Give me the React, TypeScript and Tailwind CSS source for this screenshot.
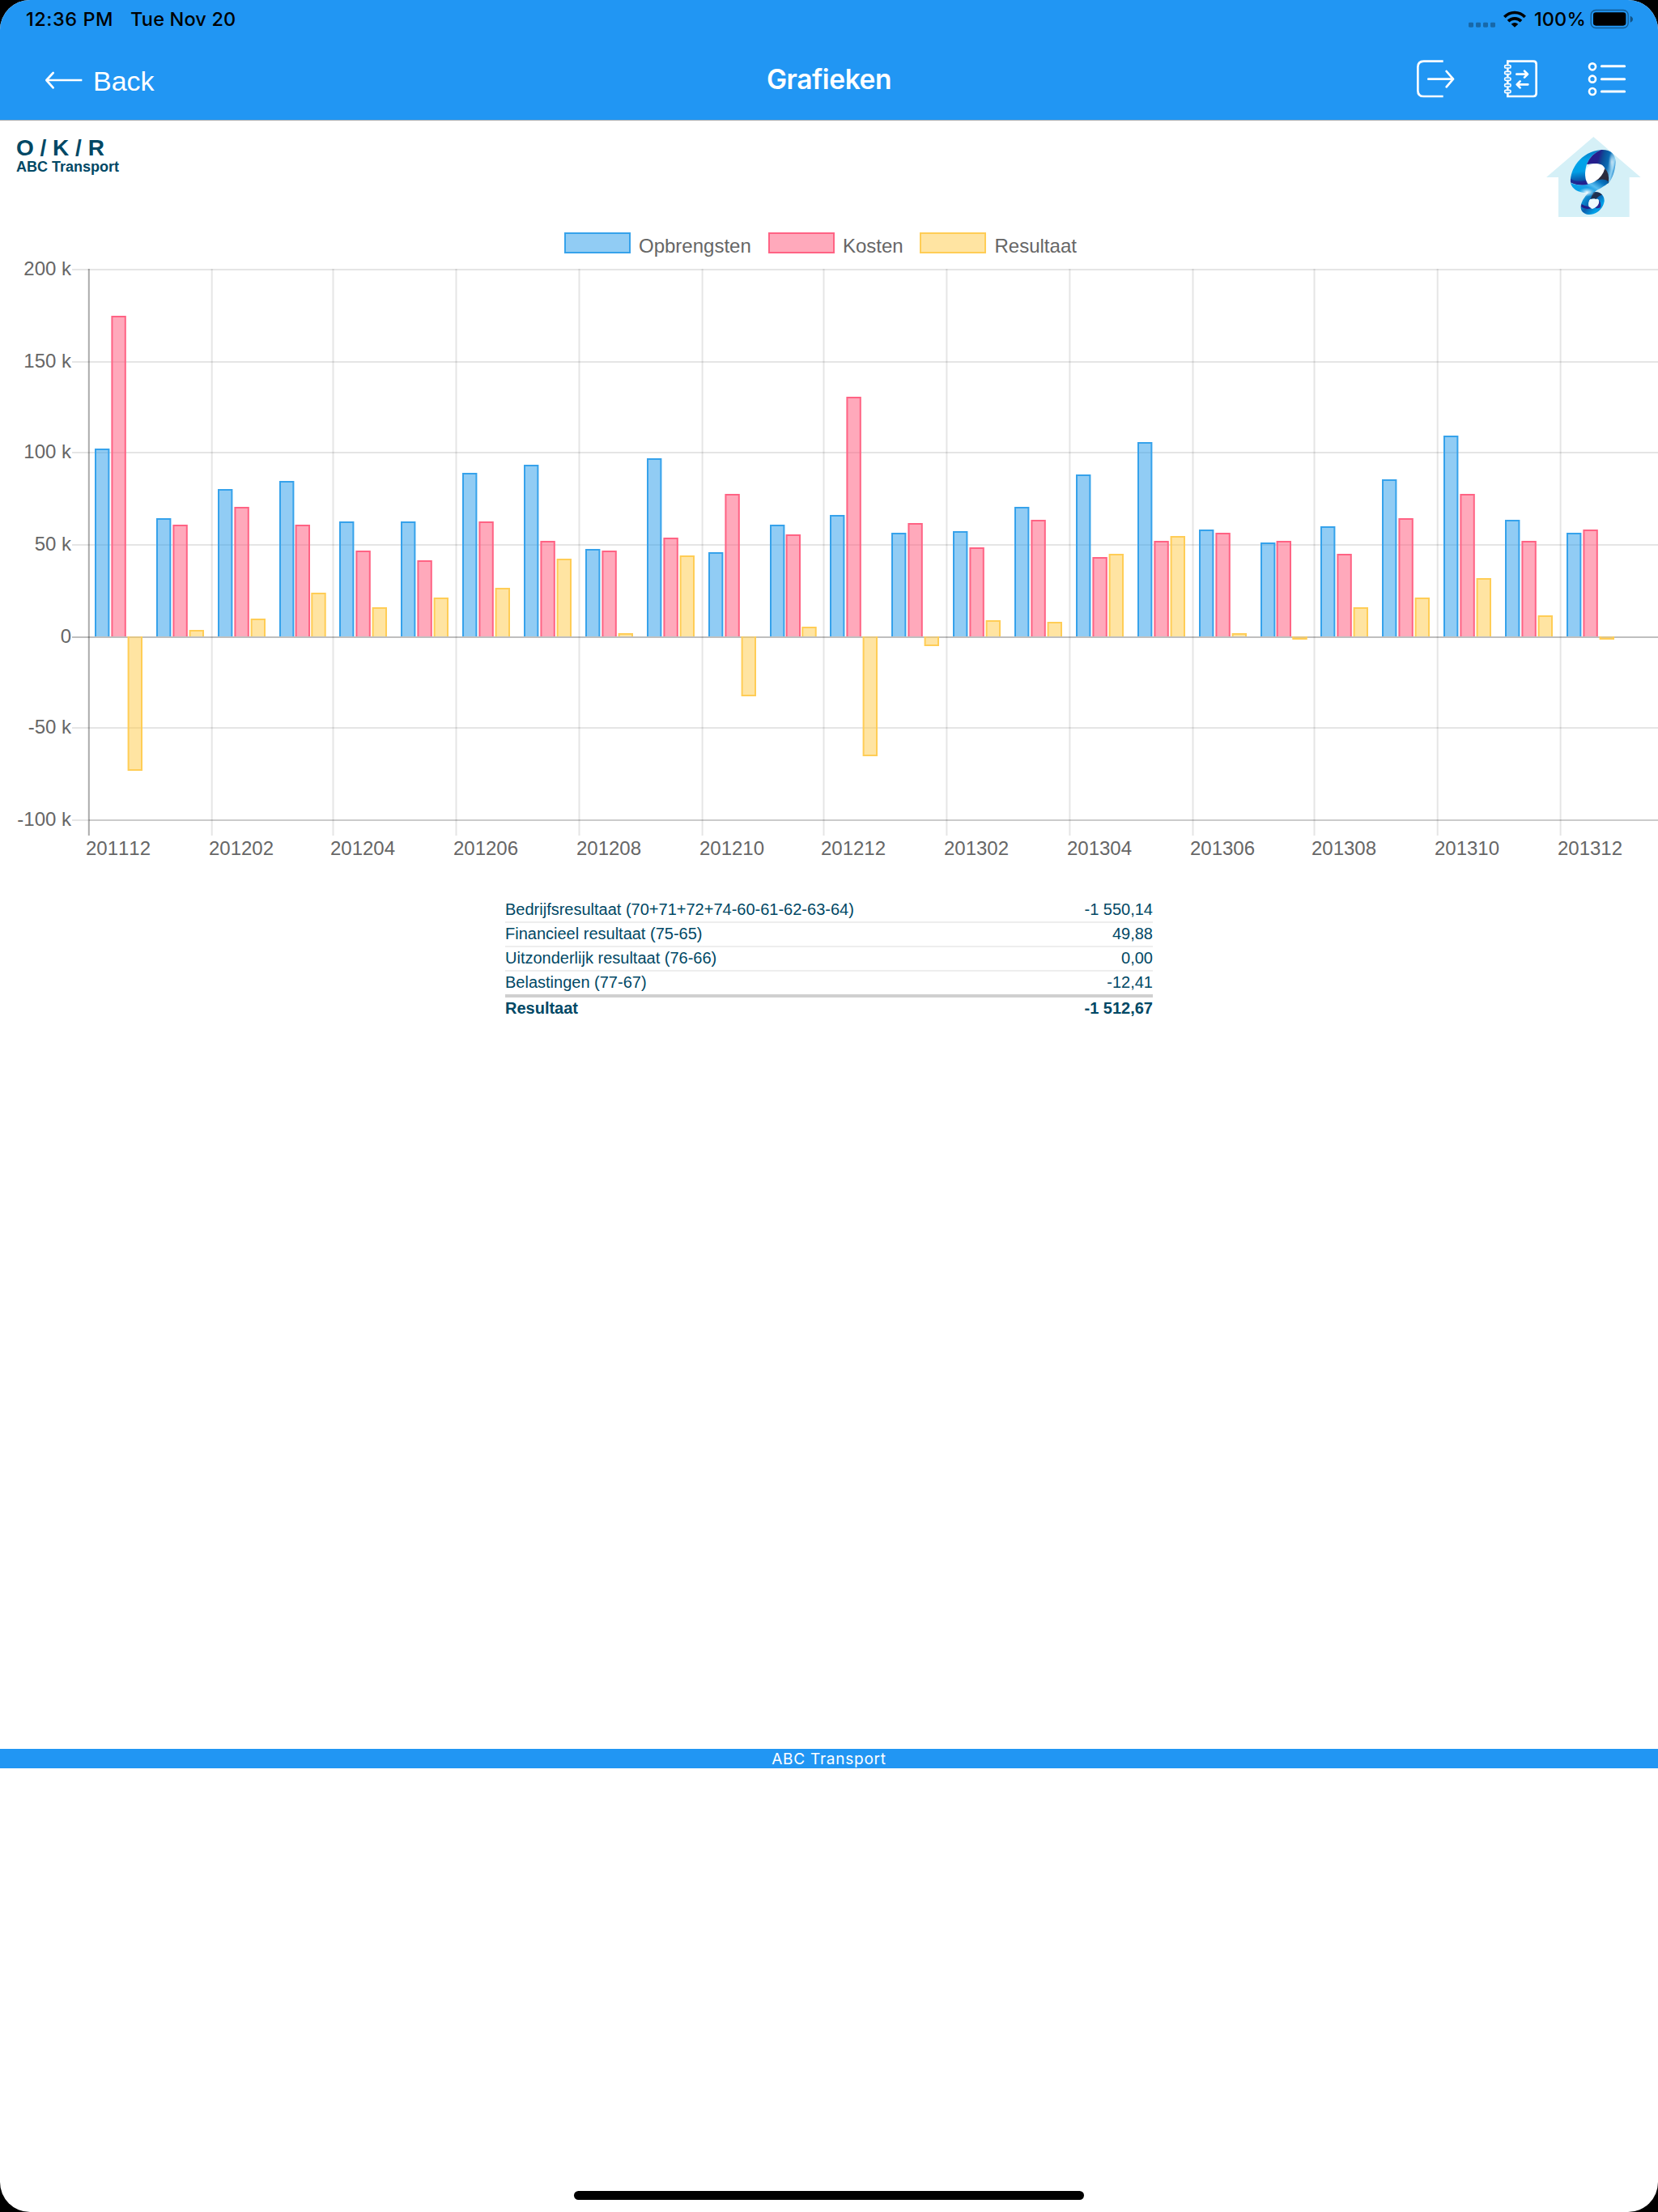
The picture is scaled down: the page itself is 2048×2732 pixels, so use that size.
import type { ReactNode } from "react";

type Group = {
    x: number;
    label?: string;
    // pixel offset of the 2nd and 3rd bar, months are not all equally wide
    red: number;
    yellow: number;
    // y of the end of each bar
    ends: [number, number, number];
};

const ZERO = 786;
const BAR = 18.4;

const groups: Group[] = [
    { x: 117, label: "201112", red: 20.4, yellow: 40.6, ends: [554, 390, 952] },
    { x: 193, red: 20.4, yellow: 40.6, ends: [640, 648, 778] },
    { x: 269, label: "201202", red: 20.4, yellow: 40.6, ends: [604, 626, 764] },
    { x: 345, red: 19.6, yellow: 39.3, ends: [594, 648, 732] },
    { x: 419, label: "201204", red: 20.4, yellow: 40.6, ends: [644, 680, 750] },
    { x: 495, red: 20.4, yellow: 40.6, ends: [644, 692, 738] },
    { x: 571, label: "201206", red: 20.4, yellow: 40.6, ends: [584, 644, 726] },
    { x: 647, red: 20.4, yellow: 40.6, ends: [574, 668, 690] },
    { x: 723, label: "201208", red: 20.4, yellow: 40.6, ends: [678, 680, 782] },
    { x: 799, red: 20.4, yellow: 40.6, ends: [566, 664, 686] },
    { x: 875, label: "201210", red: 20.4, yellow: 40.6, ends: [682, 610, 860] },
    { x: 951, red: 19.6, yellow: 39.3, ends: [648, 660, 774] },
    { x: 1025, label: "201212", red: 20.4, yellow: 40.6, ends: [636, 490, 934] },
    { x: 1101, red: 20.4, yellow: 40.6, ends: [658, 646, 798] },
    { x: 1177, label: "201302", red: 20.4, yellow: 40.6, ends: [656, 676, 766] },
    { x: 1253, red: 20.4, yellow: 40.6, ends: [626, 642, 768] },
    { x: 1329, label: "201304", red: 20.4, yellow: 40.6, ends: [586, 688, 684] },
    { x: 1405, red: 20.4, yellow: 40.6, ends: [546, 668, 662] },
    { x: 1481, label: "201306", red: 20.4, yellow: 40.6, ends: [654, 658, 782] },
    { x: 1557, red: 19.6, yellow: 39.3, ends: [670, 668, 790] },
    { x: 1631, label: "201308", red: 20.4, yellow: 40.6, ends: [650, 684, 750] },
    { x: 1707, red: 20.4, yellow: 40.6, ends: [592, 640, 738] },
    { x: 1783, label: "201310", red: 20.4, yellow: 40.6, ends: [538, 610, 714] },
    { x: 1859, red: 20.4, yellow: 40.6, ends: [642, 668, 760] },
    { x: 1935, label: "201312", red: 20.4, yellow: 40.6, ends: [658, 654, 790] },
];

const yTicks = [
    { y: 333, label: "200 k" },
    { y: 447, label: "150 k" },
    { y: 559, label: "100 k" },
    { y: 673, label: "50 k" },
    { y: 787, label: "0" },
    { y: 899, label: "-50 k" },
    { y: 1013, label: "-100 k" },
];

const xLines = [261.7, 411.5, 563.5, 715.5, 867.6, 1017.5, 1169.4, 1321.4, 1473.5, 1623.5, 1775.7, 1927.6];

const series = [
    { name: "Opbrengsten", stroke: "#36a2eb", fill: "#36a2eb8c", boxX: 697, textX: 789 },
    { name: "Kosten", stroke: "#ff6384", fill: "#ff63848c", boxX: 949, textX: 1041 },
    { name: "Resultaat", stroke: "#ffcd56", fill: "#ffcd568c", boxX: 1136, textX: 1228.5 },
];

const results = [
    { label: "Bedrijfsresultaat (70+71+72+74-60-61-62-63-64)", value: "-1 550,14" },
    { label: "Financieel resultaat (75-65)", value: "49,88" },
    { label: "Uitzonderlijk resultaat (76-66)", value: "0,00" },
    { label: "Belastingen (77-67)", value: "-12,41" },
];

function Bar({ x, end, index }: { x: number; end: number; index: number }) {
    const { stroke, fill } = series[index];
    const left = x + 1;
    const right = x + BAR - 1;
    const edge = end < ZERO ? end + 1 : end - 1;
    return (
        <g>
            <rect x={left} y={Math.min(edge, ZERO)} width={right - left} height={Math.abs(edge - ZERO)} fill={fill} />
            <path d={`M${left} ${ZERO}V${edge}H${right}V${ZERO}`} fill="none" stroke={stroke} strokeWidth="2" />
        </g>
    );
}

function Chart() {
    return (
        <svg viewBox="0 280 2048 790" className="block h-[790px] w-full shrink-0 [font-kerning:none]" fontFamily="'Liberation Sans', Arial, sans-serif" fontSize="24">
            {series.map((s) => (
                <g key={s.name}>
                    <rect x={s.boxX + 1} y="288" width="80" height="24" fill={s.fill} stroke={s.stroke} strokeWidth="2" />
                    <text x={s.textX} y="312" fill="#666">{s.name}</text>
                </g>
            ))}
            {yTicks.map((t) => (
                <g key={t.label}>
                    <rect x="89" y={t.y - 1} width="1959" height="2" fill="#000" fillOpacity={t.label === "0" ? 0.25 : 0.1} />
                    <text x="88" y={t.y + 7} textAnchor="end" fill="#666">{t.label}</text>
                </g>
            ))}
            <rect x="110" y="1012" width="1938" height="2" fill="#000" fillOpacity="0.11" />
            {xLines.map((x) => (
                <rect key={x} x={x - 1} y="332" width="2" height="700" fill="#000" fillOpacity="0.1" />
            ))}
            <rect x="108.8" y="332" width="2" height="700" fill="#000" fillOpacity="0.33" />
            {groups.map((g) => (
                <g key={g.x}>
                    <Bar x={g.x} end={g.ends[0]} index={0} />
                    <Bar x={g.x + g.red} end={g.ends[1]} index={1} />
                    <Bar x={g.x + g.yellow} end={g.ends[2]} index={2} />
                    {g.label && (
                        <text x={g.x + 29} y="1056" textAnchor="middle" fill="#666">{g.label}</text>
                    )}
                </g>
            ))}
        </svg>
    );
}

function NavIcon({ viewBox, children }: { viewBox: string; children: ReactNode }) {
    return (
        <svg viewBox={viewBox} className="size-12" fill="none" stroke="#fff" strokeWidth="8" strokeLinecap="round" strokeLinejoin="round">
            {children}
        </svg>
    );
}

function StatusBar() {
    return (
        <div className="flex h-[47px] items-center justify-between pl-8 pr-[30px] font-[Inter,sans-serif] text-[23.5px] font-medium text-black">
            <div className="flex gap-[21px]">
                <span className="tracking-[0.55px]">12:36 PM</span>
                <span className="tracking-[0.15px]">Tue Nov 20</span>
            </div>
            <div className="flex items-center">
                <svg viewBox="342 34 216 76" className="h-[25.33px] w-[72px]">
                    <g fillOpacity="0.3">
                        <rect x="342" y="84" width="18" height="18" rx="4" />
                        <rect x="369" y="84" width="18" height="18" rx="4" />
                        <rect x="396" y="84" width="18" height="18" rx="4" />
                        <rect x="423" y="84" width="18" height="18" rx="4" />
                    </g>
                    <path d="M475 64A52 52 0 0 1 551 64M489 79.500A34 34 0 0 1 537 79.500" fill="none" stroke="#000" strokeWidth="11" />
                    <path d="M500 90.500Q513 80 526 90.500L513 102Z" />
                </svg>
                <span className="ml-[9px] w-[62px] tracking-[0.1px]">100%</span>
                <svg viewBox="795 34 162 76" className="ml-[7px] h-[25.33px] w-[54px]">
                    <rect x="798.500" y="38.500" width="138" height="66" rx="18" fill="none" stroke="#000" strokeOpacity="0.4" strokeWidth="4" />
                    <rect x="807" y="47" width="121" height="49" rx="10" />
                    <path d="M944 60Q954 64 954 72T944 84Z" fillOpacity="0.45" />
                </svg>
            </div>
        </div>
    );
}

function NavBar() {
    return (
        <div className="grid h-[101px] grid-cols-[1fr_auto_1fr] items-center pl-[54px] pr-[39px] text-white">
            <div className="flex items-center gap-3 pt-[3px]">
                <svg viewBox="162 259 147 72" className="h-6 w-[49px]" fill="none" stroke="#fff" strokeWidth="8">
                    <path d="M172 295H304" />
                    <path d="M197 268L172 295L197 323" strokeLinecap="round" strokeLinejoin="round" />
                </svg>
                <span className="pt-[2px] text-[34px] leading-none">Back</span>
            </div>
            <h1 className="mr-[15px] pt-[2px] text-center font-[Inter,sans-serif] text-[33.5px] font-semibold leading-none tracking-[-0.4px]">Grafieken</h1>
            <div className="flex justify-end gap-[58px]">
                <NavIcon viewBox="147 221 144 144">
                    <path d="M248 226H176Q154 226 154 248V334Q154 356 176 356H248" strokeLinecap="butt" />
                    <path d="M193 292H285M260 263L285 292L260 321" />
                </NavIcon>
                <NavIcon viewBox="465 221 144 144">
                    <path d="M487 238V226H582Q593 226 593 237V345Q593 356 582 356H487V344M487 252V262M487 275V285M487 298V308M487 321V331" strokeLinecap="butt" strokeLinejoin="miter" />
                    {[246, 269, 292, 315, 338].map((y) => (
                        <rect key={y} x="476" y={y - 5} width="22" height="10" rx="4" strokeWidth="5" />
                    ))}
                    <path d="M520 274H560M549 262L561 274L549 286M562 312H522M533 300L521 312L533 324" />
                </NavIcon>
                <NavIcon viewBox="783 221 144 144">
                    <circle cx="801" cy="246" r="12" />
                    <circle cx="801" cy="292" r="12" />
                    <circle cx="801" cy="338" r="12" />
                    <path d="M835 244H920M835 292H920M835 338H920" strokeWidth="9" />
                </NavIcon>
            </div>
        </div>
    );
}

function Logo() {
    return (
        <svg viewBox="633 507 350 297" className="h-[99px] w-[116.67px]">
            <defs>
                <linearGradient id="left" x1="0.4" y1="0" x2="0.5" y2="1">
                    <stop offset="0" stopColor="#0a72ba" />
                    <stop offset="0.3" stopColor="#00a3ea" />
                    <stop offset="0.6" stopColor="#009fe6" />
                    <stop offset="0.85" stopColor="#0a55a8" />
                    <stop offset="1" stopColor="#29168a" />
                </linearGradient>
                <linearGradient id="right" x1="0" y1="0.3" x2="1" y2="0.6">
                    <stop offset="0" stopColor="#2a1a8c" />
                    <stop offset="0.35" stopColor="#23208c" />
                    <stop offset="0.5" stopColor="#0d4f98" />
                    <stop offset="0.7" stopColor="#0a6cb4" />
                    <stop offset="0.88" stopColor="#8fd0f2" />
                    <stop offset="1" stopColor="#0a7ac6" />
                </linearGradient>
                <linearGradient id="bottom" x1="0" y1="0.6" x2="1" y2="0">
                    <stop offset="0" stopColor="#00a0e8" />
                    <stop offset="0.35" stopColor="#1a9fe6" />
                    <stop offset="0.5" stopColor="#58bdf0" />
                    <stop offset="0.75" stopColor="#0876c2" />
                    <stop offset="1" stopColor="#064a8c" />
                </linearGradient>
                <linearGradient id="small" x1="0" y1="0" x2="1" y2="1">
                    <stop offset="0" stopColor="#c5e8f8" />
                    <stop offset="0.3" stopColor="#0a8ad0" />
                    <stop offset="0.5" stopColor="#0b5fae" />
                    <stop offset="0.75" stopColor="#00a3ea" />
                    <stop offset="1" stopColor="#0568b4" />
                </linearGradient>
                <radialGradient id="glow">
                    <stop offset="0" stopColor="#fff" stopOpacity="0.95" />
                    <stop offset="1" stopColor="#bfe8fa" stopOpacity="0" />
                </radialGradient>
            </defs>
            <path d="M808 507L983 657H941V804H678V657H633Z" fill="#d5f0f7" />
            <path d="M777 650Q775 612 815 607Q848 604 852 625Q850 655 812 680Q784 692 777 650Z" fill="#fff" />
            <path d="M723 676C720 628 760 562 836 555Q796 572 783 609C774 634 775 668 788 684Q752 690 723 676Z" fill="url(#left)" />
            <path d="M836 555C870 553 890 570 890 600C888 634 879 660 862 682Q866 640 850 624C842 602 812 604 783 609Q796 572 836 555Z" fill="url(#right)" />
            <path d="M850 624Q868 640 864 678Q846 690 812 682L814 672Q842 654 850 624Z" fill="#2a2a3c" />
            <path d="M723 677C748 690 790 688 818 670Q846 658 866 674C850 692 824 700 808 714Q796 722 788 714C756 716 728 702 723 677Z" fill="url(#bottom)" />
            <path d="M723 676C744 688 770 686 788 684L780 668Q744 676 723 662Z" fill="#24198b" fillOpacity="0.6" />
            <path d="M796 712C826 706 850 720 848 746C842 776 818 796 790 795C766 792 756 776 763 754Q771 728 805 700Q800 714 796 718ZM793 742C784 760 790 774 806 773Q832 764 828 744Q812 732 793 742Z" fillRule="evenodd" fill="url(#small)" />
            <path d="M796 738Q828 732 828 744Q830 762 804 773Q786 766 793 742Z" fill="#effafd" />
            <path d="M808 713Q828 708 840 722Q824 726 818 738Q806 732 796 738Z" fill="#20304f" />
            <path d="M762 766Q776 778 800 772L790 766Q776 766 764 756Z" fill="#241c88" />
            <path d="M828 742Q832 758 814 770Q824 774 834 768Q838 752 828 742Z" fill="#2b2a90" />
            <ellipse cx="876" cy="600" rx="13" ry="38" fill="url(#glow)" opacity="0.7" />
            <ellipse cx="784" cy="712" rx="32" ry="17" fill="url(#glow)" />
        </svg>
    );
}

function ResultTable() {
    return (
        <div className="mx-auto mt-10 w-[800px] text-[20px] leading-[27px] text-[#004865] [font-kerning:none]">
            {results.map((r) => (
                <div key={r.label} className="flex h-[30px] justify-between border-b-2 border-[#eee] nth-4:h-7 nth-4:border-b-0">
                    <span>{r.label}</span>
                    <span>{r.value}</span>
                </div>
            ))}
            <div className="flex justify-between border-t-4 border-[#d0d0d0] font-bold">
                <span>Resultaat</span>
                <span>-1 512,67</span>
            </div>
        </div>
    );
}

function App() {
    return (
        <div className="h-[2732px] w-[2048px] bg-black font-['Liberation_Sans',Arial,sans-serif]">
            <div className="flex h-full flex-col overflow-hidden rounded-[37px] bg-white">
                <header className="h-[149px] shrink-0 border-b border-[#a9adb1] bg-[#2196f3]">
                    <StatusBar />
                    <NavBar />
                </header>
                <main className="flex h-[2011px] shrink-0 flex-col">
                    <div className="flex h-[131px] shrink-0 items-start justify-between pl-5 pr-[21px] pt-5 text-[#004865]">
                        <div className="font-bold">
                            <h2 className="text-[28px] leading-[27px]">O / K / R</h2>
                            <p className="text-[18px] leading-5">ABC Transport</p>
                        </div>
                        <Logo />
                    </div>
                    <Chart />
                    <ResultTable />
                </main>
                <div className="h-6 shrink-0 bg-[#2196f3] text-center font-[Inter,sans-serif] text-[19px] leading-[25px] tracking-[0.75px] text-white">
                    ABC Transport
                </div>
                <div className="mx-auto mb-[15px] mt-auto h-[11px] w-[630px] rounded-full bg-black" />
            </div>
        </div>
    );
}

export default App;
